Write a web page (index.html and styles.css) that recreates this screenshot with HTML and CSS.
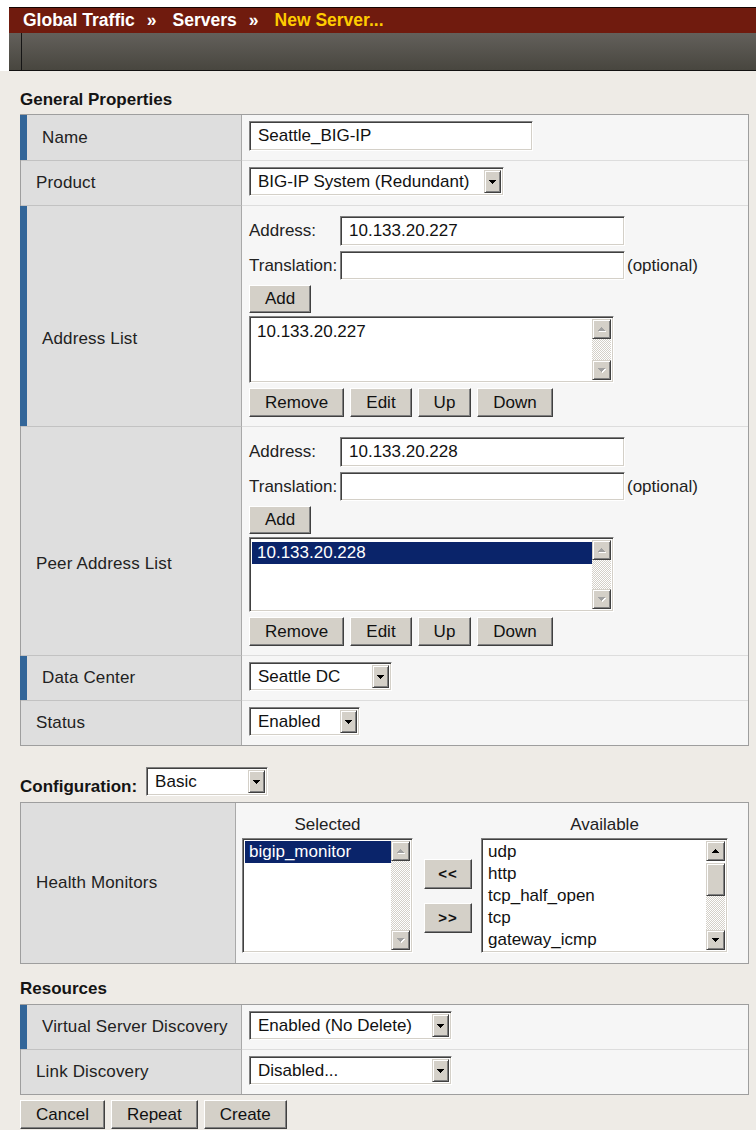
FILE: index.html
```html
<!DOCTYPE html>
<html lang="en">
<head>
<meta charset="utf-8">
<title>Global Traffic : Servers : New Server</title>
<link rel="stylesheet" href="styles.css">
</head>
<body>
<header class="banner">
  <div class="crumbs">
    <span>Global Traffic</span><span class="sep">&raquo;</span><span>Servers</span><span class="sep">&raquo;</span><span class="current">New Server...</span>
  </div>
  <div class="toolbar"><div class="tb-edge"></div></div>
</header>

<main class="content">
  <h2 class="section-title">General Properties</h2>
  <table class="props">
    <tr>
      <td class="label req">Name</td>
      <td class="value"><input class="field w-name" type="text" value="Seattle_BIG-IP"></td>
    </tr>
    <tr>
      <td class="label">Product</td>
      <td class="value">
        <div class="select w-product"><span class="sel-text">BIG-IP System (Redundant)</span><span class="sel-btn"><svg width="7" height="4" viewBox="0 0 7 4"><path d="M0 0h7v1H0zM1 1h5v1H1zM2 2h3v1H2zM3 3h1v1H3z"/></svg></span></div>
      </td>
    </tr>
    <tr>
      <td class="label req tall">Address List</td>
      <td class="value stack">
        <div class="addr-grid">
          <span class="fl">Address:</span><input class="field w-addr" type="text" value="10.133.20.227"><span></span>
          <span class="fl">Translation:</span><input class="field w-addr short" type="text" value=""><span class="hint">(optional)</span>
        </div>
        <button class="btn add">Add</button>
        <div class="listbox lb-addr">
          <ul class="items"><li>10.133.20.227</li></ul>
          <div class="vscroll off">
            <span class="arrow"><svg width="8" height="5" viewBox="0 0 8 5"><path class="hl" d="M4 1h1v1H4zM3 2h3v1H3zM2 3h5v1H2zM1 4h7v1H1z"/><path d="M3 0h1v1H3zM2 1h3v1H2zM1 2h5v1H1zM0 3h7v1H0z"/></svg></span>
            <span class="track"></span>
            <span class="arrow"><svg width="8" height="5" viewBox="0 0 8 5"><path class="hl" d="M1 1h7v1H1zM2 2h5v1H2zM3 3h3v1H3zM4 4h1v1H4z"/><path d="M0 0h7v1H0zM1 1h5v1H1zM2 2h3v1H2zM3 3h1v1H3z"/></svg></span>
          </div>
        </div>
        <div class="btn-row">
          <button class="btn">Remove</button><button class="btn">Edit</button><button class="btn">Up</button><button class="btn">Down</button>
        </div>
      </td>
    </tr>
    <tr>
      <td class="label tall">Peer Address List</td>
      <td class="value stack">
        <div class="addr-grid">
          <span class="fl">Address:</span><input class="field w-addr" type="text" value="10.133.20.228"><span></span>
          <span class="fl">Translation:</span><input class="field w-addr short" type="text" value=""><span class="hint">(optional)</span>
        </div>
        <button class="btn add">Add</button>
        <div class="listbox lb-peer">
          <ul class="items"><li class="on">10.133.20.228</li></ul>
          <div class="vscroll off">
            <span class="arrow"><svg width="8" height="5" viewBox="0 0 8 5"><path class="hl" d="M4 1h1v1H4zM3 2h3v1H3zM2 3h5v1H2zM1 4h7v1H1z"/><path d="M3 0h1v1H3zM2 1h3v1H2zM1 2h5v1H1zM0 3h7v1H0z"/></svg></span>
            <span class="track"></span>
            <span class="arrow"><svg width="8" height="5" viewBox="0 0 8 5"><path class="hl" d="M1 1h7v1H1zM2 2h5v1H2zM3 3h3v1H3zM4 4h1v1H4z"/><path d="M0 0h7v1H0zM1 1h5v1H1zM2 2h3v1H2zM3 3h1v1H3z"/></svg></span>
          </div>
        </div>
        <div class="btn-row">
          <button class="btn">Remove</button><button class="btn">Edit</button><button class="btn">Up</button><button class="btn">Down</button>
        </div>
      </td>
    </tr>
    <tr>
      <td class="label req">Data Center</td>
      <td class="value">
        <div class="select w-dc"><span class="sel-text">Seattle DC</span><span class="sel-btn"><svg width="7" height="4" viewBox="0 0 7 4"><path d="M0 0h7v1H0zM1 1h5v1H1zM2 2h3v1H2zM3 3h1v1H3z"/></svg></span></div>
      </td>
    </tr>
    <tr>
      <td class="label">Status</td>
      <td class="value">
        <div class="select w-status"><span class="sel-text">Enabled</span><span class="sel-btn"><svg width="7" height="4" viewBox="0 0 7 4"><path d="M0 0h7v1H0zM1 1h5v1H1zM2 2h3v1H2zM3 3h1v1H3z"/></svg></span></div>
      </td>
    </tr>
  </table>

  <div class="config-line">
    <span class="config-title">Configuration:</span>
    <div class="select w-basic"><span class="sel-text">Basic</span><span class="sel-btn"><svg width="7" height="4" viewBox="0 0 7 4"><path d="M0 0h7v1H0zM1 1h5v1H1zM2 2h3v1H2zM3 3h1v1H3z"/></svg></span></div>
  </div>

  <table class="props health">
    <tr>
      <td class="label">Health Monitors</td>
      <td class="value monitors">
        <div class="mon-grid">
          <div class="mon-head">Selected</div>
          <div></div>
          <div class="mon-head">Available</div>

          <div class="listbox lb-selected">
            <ul class="items tight"><li class="on">bigip_monitor</li></ul>
            <div class="vscroll off">
              <span class="arrow"><svg width="8" height="5" viewBox="0 0 8 5"><path class="hl" d="M4 1h1v1H4zM3 2h3v1H3zM2 3h5v1H2zM1 4h7v1H1z"/><path d="M3 0h1v1H3zM2 1h3v1H2zM1 2h5v1H1zM0 3h7v1H0z"/></svg></span>
              <span class="track"></span>
              <span class="arrow"><svg width="8" height="5" viewBox="0 0 8 5"><path class="hl" d="M1 1h7v1H1zM2 2h5v1H2zM3 3h3v1H3zM4 4h1v1H4z"/><path d="M0 0h7v1H0zM1 1h5v1H1zM2 2h3v1H2zM3 3h1v1H3z"/></svg></span>
            </div>
          </div>

          <div class="mover">
            <button class="btn move">&lt;&lt;</button>
            <button class="btn move">&gt;&gt;</button>
          </div>

          <div class="listbox lb-available">
            <ul class="items tight">
              <li>udp</li>
              <li>http</li>
              <li>tcp_half_open</li>
              <li>tcp</li>
              <li>gateway_icmp</li>
            </ul>
            <div class="vscroll">
              <span class="arrow"><svg width="7" height="4" viewBox="0 0 7 4"><path d="M3 0h1v1H3zM2 1h3v1H2zM1 2h5v1H1zM0 3h7v1H0z"/></svg></span>
              <span class="thumb"></span>
              <span class="track"></span>
              <span class="arrow"><svg width="7" height="4" viewBox="0 0 7 4"><path d="M0 0h7v1H0zM1 1h5v1H1zM2 2h3v1H2zM3 3h1v1H3z"/></svg></span>
            </div>
          </div>
        </div>
      </td>
    </tr>
  </table>

  <h2 class="section-title resources">Resources</h2>
  <table class="props">
    <tr>
      <td class="label req">Virtual Server Discovery</td>
      <td class="value">
        <div class="select w-res"><span class="sel-text">Enabled (No Delete)</span><span class="sel-btn"><svg width="7" height="4" viewBox="0 0 7 4"><path d="M0 0h7v1H0zM1 1h5v1H1zM2 2h3v1H2zM3 3h1v1H3z"/></svg></span></div>
      </td>
    </tr>
    <tr>
      <td class="label">Link Discovery</td>
      <td class="value">
        <div class="select w-res"><span class="sel-text">Disabled...</span><span class="sel-btn"><svg width="7" height="4" viewBox="0 0 7 4"><path d="M0 0h7v1H0zM1 1h5v1H1zM2 2h3v1H2zM3 3h1v1H3z"/></svg></span></div>
      </td>
    </tr>
  </table>

  <div class="actions">
    <button class="btn">Cancel</button><button class="btn">Repeat</button><button class="btn">Create</button>
  </div>
</main>
</body>
</html>
```

FILE: styles.css
```css
* { box-sizing: border-box; }

html, body { overflow: hidden; }

body {
  margin: 0;
  background: #eeebe6;
  font-family: "Liberation Sans", Arial, sans-serif;
  font-size: 17px;
  color: #1e1e1e;
}

/* ---- top banner ---- */
.banner {
  background: #fff;
  padding: 7px 0 0 9px;
}
.crumbs {
  height: 26px;
  border-top: 1px solid #140502;
  background: #701b0e;
  color: #fff;
  font-weight: bold;
  font-size: 17.5px;
  line-height: 24px;
  padding-left: 14px;
  white-space: nowrap;
}
.crumbs .sep { margin: 0 16px 0 12px; }
.crumbs .current { color: #ffcc00; }

.toolbar {
  height: 38px;
  display: flex;
  background: linear-gradient(#63605b, #48463f);
  border-bottom: 1px solid #121212;
}
.tb-edge {
  width: 13px;
  border-right: 1px solid #151515;
}

/* ---- page body ---- */
.content { padding: 19px 7px 0 20px; }

.section-title {
  margin: 0 0 4px;
  font-size: 17px;
  line-height: 20px;
  font-weight: bold;
  color: #141414;
}
.section-title.resources { margin: 15px 0 5px; }

/* ---- property tables ---- */
.props {
  width: 729px;
  border-collapse: separate;
  border-spacing: 0;
  border: 1px solid #9e9e9e;
}
.props td { padding: 0; }
.props tr + tr td { border-top: 1px solid #c2c2c2; }
.props tr + tr td.value { border-top-color: #dddddd; }

.label {
  position: relative;
  width: 221px;
  background: #dedede;
  border-right: 1px solid #a9a9a9;
  padding-left: 15px !important;
  color: #222;
  vertical-align: middle;
  white-space: nowrap;
  letter-spacing: 0.15px;
}
.label.req { padding-left: 21px !important; }
.label.req::before {
  content: "";
  position: absolute;
  left: -1px;
  top: 0;
  bottom: 0;
  width: 7px;
  background: #336699;
}
.label.tall { padding-top: 45px !important; }

.value {
  background: #f6f6f6;
  padding: 6px 7px 9px !important;
  vertical-align: top;
}
.value.stack { padding: 10px 7px 9px !important; }

/* ---- classic sunken / raised edges ---- */
.field, .select, .listbox {
  border: 1px solid;
  border-color: #808080 #ffffff #ffffff #808080;
  box-shadow: inset 1px 1px #404040, inset -1px -1px #d4d0c8;
  background: #fff;
}

.field {
  display: block;
  height: 30px;
  padding: 0 8px;
  font: 17px "Liberation Sans", Arial, sans-serif;
  color: #111;
  outline: none;
}
.field.short { height: 29px; }
.w-name { width: 284px; }
.w-addr { width: 285px; }

.select {
  display: flex;
  align-items: center;
  height: 29px;
  padding: 2px;
  color: #111;
}
.sel-text {
  flex: 1;
  padding-left: 6px;
  white-space: nowrap;
  overflow: hidden;
}
.sel-btn {
  width: 17px;
  align-self: stretch;
  display: flex;
  align-items: center;
  justify-content: center;
  background: #d4d0c8;
  border: 1px solid;
  border-color: #d4d0c8 #404040 #404040 #d4d0c8;
  box-shadow: inset 1px 1px #fff, inset -1px -1px #808080;
}
.sel-btn svg { fill: #000; }

.w-product { width: 255px; }
.w-dc { width: 143px; }
.w-status { width: 111px; }
.w-basic { width: 122px; }
.w-res { width: 203px; }

.btn {
  height: 29px;
  padding: 0 15px;
  background: #d4d0c8;
  border: 1px solid;
  border-color: #ffffff #404040 #404040 #ffffff;
  box-shadow: inset -1px -1px #808080;
  font: 17px "Liberation Sans", Arial, sans-serif;
  color: #111;
  border-radius: 0;
}
.btn.add { display: block; height: 28px; width: 62px; padding: 0; margin-top: 5px; }
.btn.move {
  width: 48px;
  height: 30px;
  padding: 0;
  font-weight: bold;
  font-size: 15px;
  letter-spacing: 1px;
}

.btn-row, .actions { display: flex; gap: 6px; }
.btn-row { margin-top: 5px; }
.actions { margin-top: 5px; }

/* ---- address blocks ---- */
.addr-grid {
  display: grid;
  grid-template-columns: 91px 285px auto;
  row-gap: 5px;
  align-items: center;
}
.fl { color: #222; white-space: nowrap; }
.hint { padding-left: 2px; color: #222; }

/* ---- list boxes ---- */
.listbox {
  display: flex;
  padding: 2px;
  margin-top: 3px;
}
.lb-addr { width: 365px; height: 67px; }
.lb-peer { width: 365px; height: 75px; }
.lb-selected, .lb-available { height: 115px; margin-top: 0; }

.items {
  flex: 1;
  margin: 0;
  padding: 2px 0 0;
  list-style: none;
  line-height: 22px;
  color: #111;
  white-space: nowrap;
  overflow: hidden;
}
.items.tight { padding-top: 0; }
.items li { padding-left: 5px; }
.items.tight li { padding-left: 4px; line-height: 22px; }
.items li.on { background: #0a246a; color: #fff; }

.vscroll {
  width: 19px;
  display: flex;
  flex-direction: column;
}
.vscroll .arrow, .vscroll .thumb {
  height: 20px;
  display: flex;
  align-items: center;
  justify-content: center;
  background: #d4d0c8;
  border: 1px solid;
  border-color: #d4d0c8 #404040 #404040 #d4d0c8;
  box-shadow: inset 1px 1px #fff, inset -1px -1px #808080;
}
.vscroll .thumb { height: 33px; margin-top: 2px; }
.vscroll .track {
  flex: 1;
  background: repeating-conic-gradient(#d4d0c8 0 25%, #ffffff 0 50%) 0 0 / 2px 2px;
}
.vscroll .arrow svg { fill: #000; }
.vscroll.off .arrow svg { fill: #a0a0a0; }
.vscroll.off .arrow svg .hl { fill: #ffffff; }
.vscroll:not(.off) .arrow svg .hl { display: none; }

/* ---- configuration line ---- */
.config-line {
  display: flex;
  align-items: flex-end;
  gap: 9px;
  margin: 21px 0 6px;
}
.config-title {
  font-weight: bold;
  line-height: 20px;
  color: #141414;
  margin-bottom: -1px;
}

/* ---- health monitors ---- */
.health .label { width: 215px; }
.value.monitors { padding: 12px 6px 10px !important; }
.mon-grid {
  display: grid;
  grid-template-columns: 171px 48px 245px;
  column-gap: 11px;
  row-gap: 3px;
}
.mon-grid > :nth-child(3n) { margin-left: -2px; }
.mon-head {
  text-align: center;
  line-height: 20px;
  color: #222;
}
.mover {
  display: flex;
  flex-direction: column;
  justify-content: center;
  gap: 14px;
}
```
